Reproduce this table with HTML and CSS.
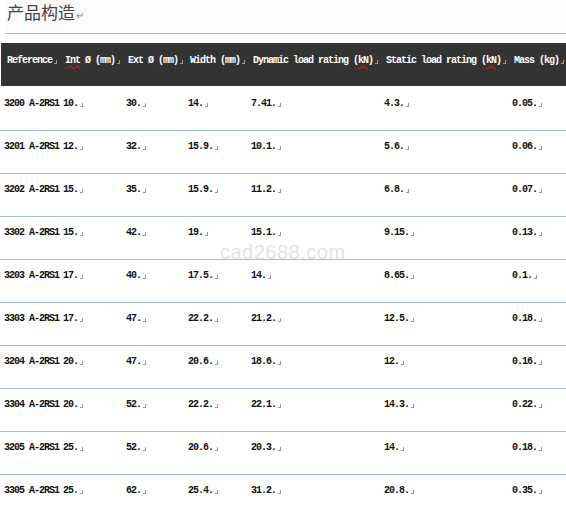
FILE: index.html
```html
<!DOCTYPE html>
<html>
<head>
<meta charset="utf-8">
<link rel="stylesheet" href="styles.css">
</head>
<body>
<div class="page">
  <div class="title">产品构造<span class="ret">↵</span></div>
  <div class="table">
    <div class="row head">
      <div class="c">Reference<i class="mk"></i></div>
      <div class="c"><span class="sp">Int</span> Ø (mm)<i class="mk"></i></div>
      <div class="c">Ext Ø (mm)<i class="mk"></i></div>
      <div class="c">Width (mm)<i class="mk"></i></div>
      <div class="c">Dynamic load rating (<span class="sp">kN</span>)<i class="mk"></i></div>
      <div class="c">Static load rating (<span class="sp">kN</span>)<i class="mk"></i></div>
      <div class="c">Mass (kg)<i class="mk"></i></div>
    </div>
    <div class="row"><div class="c">3200 A-2RS1</div><div class="c">10.<i class="mk"></i></div><div class="c">30.<i class="mk"></i></div><div class="c">14.<i class="mk"></i></div><div class="c">7.41.<i class="mk"></i></div><div class="c">4.3.<i class="mk"></i></div><div class="c">0.05.<i class="mk"></i></div></div>
    <div class="row"><div class="c">3201 A-2RS1</div><div class="c">12.<i class="mk"></i></div><div class="c">32.<i class="mk"></i></div><div class="c">15.9.<i class="mk"></i></div><div class="c">10.1.<i class="mk"></i></div><div class="c">5.6.<i class="mk"></i></div><div class="c">0.06.<i class="mk"></i></div></div>
    <div class="row"><div class="c">3202 A-2RS1</div><div class="c">15.<i class="mk"></i></div><div class="c">35.<i class="mk"></i></div><div class="c">15.9.<i class="mk"></i></div><div class="c">11.2.<i class="mk"></i></div><div class="c">6.8.<i class="mk"></i></div><div class="c">0.07.<i class="mk"></i></div></div>
    <div class="row"><div class="c">3302 A-2RS1</div><div class="c">15.<i class="mk"></i></div><div class="c">42.<i class="mk"></i></div><div class="c">19.<i class="mk"></i></div><div class="c">15.1.<i class="mk"></i></div><div class="c">9.15.<i class="mk"></i></div><div class="c">0.13.<i class="mk"></i></div></div>
    <div class="row"><div class="c">3203 A-2RS1</div><div class="c">17.<i class="mk"></i></div><div class="c">40.<i class="mk"></i></div><div class="c">17.5.<i class="mk"></i></div><div class="c">14.<i class="mk"></i></div><div class="c">8.65.<i class="mk"></i></div><div class="c">0.1.<i class="mk"></i></div></div>
    <div class="row"><div class="c">3303 A-2RS1</div><div class="c">17.<i class="mk"></i></div><div class="c">47.<i class="mk"></i></div><div class="c">22.2.<i class="mk"></i></div><div class="c">21.2.<i class="mk"></i></div><div class="c">12.5.<i class="mk"></i></div><div class="c">0.18.<i class="mk"></i></div></div>
    <div class="row"><div class="c">3204 A-2RS1</div><div class="c">20.<i class="mk"></i></div><div class="c">47.<i class="mk"></i></div><div class="c">20.6.<i class="mk"></i></div><div class="c">18.6.<i class="mk"></i></div><div class="c">12.<i class="mk"></i></div><div class="c">0.16.<i class="mk"></i></div></div>
    <div class="row"><div class="c">3304 A-2RS1</div><div class="c">20.<i class="mk"></i></div><div class="c">52.<i class="mk"></i></div><div class="c">22.2.<i class="mk"></i></div><div class="c">22.1.<i class="mk"></i></div><div class="c">14.3.<i class="mk"></i></div><div class="c">0.22.<i class="mk"></i></div></div>
    <div class="row"><div class="c">3205 A-2RS1</div><div class="c">25.<i class="mk"></i></div><div class="c">52.<i class="mk"></i></div><div class="c">20.6.<i class="mk"></i></div><div class="c">20.3.<i class="mk"></i></div><div class="c">14.<i class="mk"></i></div><div class="c">0.18.<i class="mk"></i></div></div>
    <div class="row"><div class="c">3305 A-2RS1</div><div class="c">25.<i class="mk"></i></div><div class="c">62.<i class="mk"></i></div><div class="c">25.4.<i class="mk"></i></div><div class="c">31.2.<i class="mk"></i></div><div class="c">20.8.<i class="mk"></i></div><div class="c">0.35.<i class="mk"></i></div></div>
  </div>
  <div class="watermark">cad2688.com</div>
</div>
</body>
</html>
```

FILE: styles.css
```css
html, body {
  margin: 0;
  padding: 0;
  background: #ffffff;
}
.page {
  position: relative;
  width: 566px;
  height: 506px;
  overflow: hidden;
}
.title {
  margin-left: 5px;
  height: 34px;
  box-sizing: border-box;
  padding: 0 0 0 2px;
  border-bottom: 1px solid #a3bfdf;
  background: #fbfbfb;
  font-family: "Noto Sans CJK SC", "Noto Sans", sans-serif;
  font-size: 17px;
  line-height: 24px;
  color: #444444;
}
.ret {
  font-size: 10px;
  color: #888888;
  margin-left: 1px;
}
.table {
  margin-top: 9px;
  font-family: "Liberation Mono", "DejaVu Sans Mono", monospace;
  font-weight: bold;
  font-size: 10px;
  letter-spacing: -1px;
  color: #111111;
}
.row {
  display: grid;
  grid-template-columns: 59px 63px 62px 63px 133px 128px 1fr;
  height: 43px;
  box-sizing: border-box;
  border-bottom: 1px solid #a3bfdf;
}
.row .c {
  padding: 10px 0 0 4px;
  line-height: 11px;
  white-space: nowrap;
}
.row.head {
  margin-left: 1px;
  margin-bottom: 2px;
  height: 43px;
  background: #333333;
  color: #ffffff;
  border-bottom: none;
  grid-template-columns: 58px 63px 62px 63px 133px 128px 1fr;
}
.row.head .c {
  padding: 12px 0 0 6px;
  line-height: 12px;
}
.sp {
  text-decoration: underline wavy #e02020;
  text-decoration-thickness: 1px;
  text-underline-offset: 2px;
}
.mk {
  display: inline-block;
  width: 2px;
  height: 3px;
  margin-left: 2px;
  border-right: 1px solid #9a9a9a;
  border-bottom: 1px solid #9a9a9a;
  vertical-align: -1px;
}
.watermark {
  position: absolute;
  left: 220px;
  top: 241px;
  font-family: "Liberation Sans", Arial, sans-serif;
  font-size: 20px;
  letter-spacing: 0.5px;
  color: #e4e4e4;
  pointer-events: none;
}
```
